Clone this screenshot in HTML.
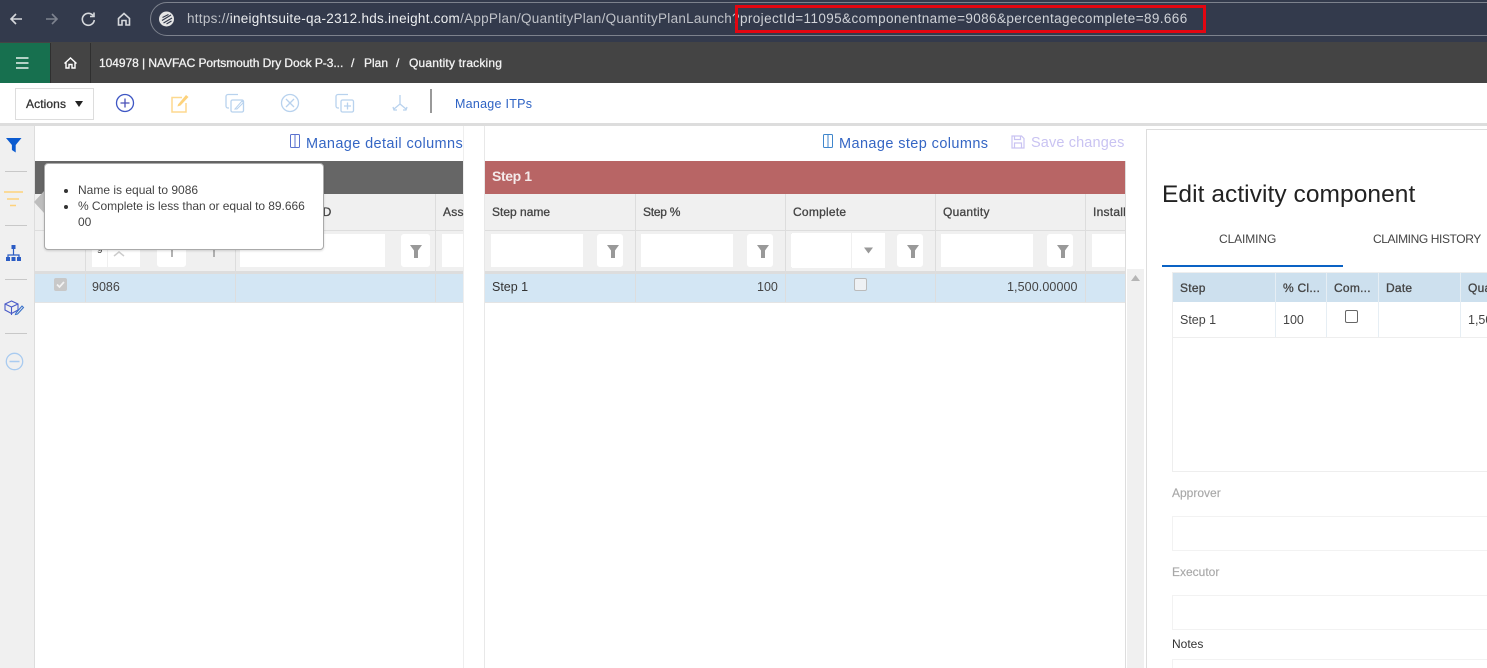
<!DOCTYPE html>
<html><head><meta charset="utf-8"><title>Quantity tracking</title>
<style>
html,body{margin:0;padding:0;width:1487px;height:668px;overflow:hidden;background:#fff;font-family:"Liberation Sans",sans-serif}
#p{position:relative;width:1487px;height:668px;overflow:hidden;background:#fff}
.b{position:absolute}
.t{position:absolute;white-space:nowrap;line-height:16px;font-size:12px;color:#333}
.h{color:#444;font-size:12px;-webkit-text-stroke:.3px #444;letter-spacing:.25px}
.n{color:#f2f2f2;font-size:12px;-webkit-text-stroke:.3px #f2f2f2}
.f{position:absolute;background:#fff;top:234px;height:33px}
.fb{position:absolute;background:#fff;top:234px;width:26px;height:33px;border-radius:3px}
svg{position:absolute;overflow:visible}
</style></head><body><div id="p">

<!-- browser bar -->
<div class="b" style="left:0;top:0;width:1487px;height:42px;background:#333a4c"></div>
<div class="b" style="left:150px;top:2px;width:1400px;height:34px;border:1px solid #7d828d;border-radius:17px;box-sizing:border-box"></div>
<svg style="left:0;top:0" width="150" height="42" fill="none" stroke-width="1.6">
<path d="M22 19H11M16 14l-5 5 5 5" stroke="#d6d8dc"/>
<path d="M46 19h11M52 14l5 5-5 5" stroke="#7e838f"/>
<path d="M93 15.500a6 6 0 1 0 1.300 4.500M94 12.500v4h-4" stroke="#d6d8dc"/>
<path d="M118.500 18.500l5.500-5 5.500 5v6.500h-3.500v-4.500h-4v4.500h-3.500z" stroke="#d6d8dc"/>
<circle cx="166.500" cy="19" r="7.500" fill="#e6e6e6" stroke="none"/>
</svg>
<svg style="left:159px;top:11px" width="16" height="16" fill="none" stroke="#333a4c" stroke-width="1.200"><path d="M3.500 6.500l6-3M3 9.500l9-5.500M4.500 12l8.500-5M7.500 13l5-3"/></svg>
<div class="t" style="left:187px;top:11px;font-size:13.500px;color:#bfc2c8;letter-spacing:.27px">https://<span style="color:#eceef0">ineightsuite-qa-2312.hds.ineight.com</span>/AppPlan/QuantityPlan/QuantityPlanLaunch?</div>
<div class="t" style="left:740px;top:11px;font-size:13.500px;color:#d0d3d8;letter-spacing:.39px">projectId=11095&amp;componentname=9086&amp;percentagecomplete=89.666</div>
<div class="b" style="left:735px;top:5px;width:471px;height:28px;border:3px solid #e30611;box-sizing:border-box"></div>

<!-- app header -->
<div class="b" style="left:0;top:42px;width:1487px;height:41px;background:#444"></div>
<div class="b" style="left:0;top:43px;width:50px;height:40px;background:#17704f"></div>
<div class="b" style="left:50px;top:43px;width:1px;height:40px;background:#2f2f2f"></div>
<div class="b" style="left:90px;top:43px;width:1px;height:40px;background:#2f2f2f"></div>
<svg style="left:0;top:43px" width="90" height="40" fill="none" stroke="#fff">
<path d="M16 15h12.500M16 20h12.500M16 25h12.500" stroke-width="1.500" stroke="#e9f2ee"/>
<path d="M64.500 20.500l6-5.500 6 5.500M66 19.500v5.500h3v-3.500h3v3.500h3v-5.500" stroke-width="1.400"/>
</svg>
<div class="t n" style="left:99px;top:55px;letter-spacing:-.05px">104978 | NAVFAC Portsmouth Dry Dock P-3...</div>
<div class="t n" style="left:351px;top:55px">/</div>
<div class="t n" style="left:364px;top:55px">Plan</div>
<div class="t n" style="left:396px;top:55px">/</div>
<div class="t n" style="left:409px;top:55px;letter-spacing:.18px">Quantity tracking</div>

<!-- toolbar -->
<div class="b" style="left:0;top:123px;width:1487px;height:3px;background:#ddd"></div>
<div class="b" style="left:15px;top:88px;width:79px;height:32px;border:1px solid #ddd;box-sizing:border-box"></div>
<div class="t" style="left:26px;top:96px;color:#333;-webkit-text-stroke:.3px #333;letter-spacing:.1px">Actions</div>
<svg style="left:75px;top:101px" width="9" height="6"><path d="M0 0h8L4 6z" fill="#222"/></svg>
<svg style="left:100px;top:85px" width="320" height="38" fill="none" stroke-width="1.300">
<circle cx="25" cy="18" r="8.500" stroke="#3f57c4"/><path d="M25 13.500v9M20.500 18h9" stroke="#4a50b8"/>
<path d="M82 12.500H72V27H86V18" stroke="#fdd98f" stroke-width="1.500"/><path d="M78 19.500l8-9.500 2.500 2-8 8.500-3 1z" fill="#fdd27b"/>
<path d="M138 9.500h-10a2 2 0 0 0-2 2V21a2 2 0 0 0 2 2h1" stroke="#b8d2ee"/>
<rect x="131" y="15" width="12.500" height="12" rx="1.500" stroke="#b8d2ee"/><path d="M135 24l7-8 1.500 1.500-6.500 6.500z" stroke="#b8d2ee" stroke-width="1"/>
<circle cx="190" cy="18" r="8.500" stroke="#b8d2ee"/><path d="M186 14l8 8M194 14l-8 8" stroke="#b8d2ee"/>
<path d="M248 9.500h-10a2 2 0 0 0-2 2V21a2 2 0 0 0 2 2h1" stroke="#b8d2ee"/>
<rect x="241" y="15" width="12.500" height="12" rx="1.500" stroke="#b8d2ee"/><path d="M247.500 17.500v7M244 21h7" stroke="#b8d2ee"/>
<path d="M300 10v9l-6 5M300 19l6 5M293 22l1 3 3 0M307 22l-1 3-3 0" stroke="#b8d2ee"/>
</svg>
<div class="b" style="left:430px;top:89px;width:2px;height:24px;background:#999"></div>
<div class="t" style="left:455px;top:96px;color:#2d62c4;font-size:12.500px;letter-spacing:.26px">Manage ITPs</div>

<!-- left rail -->
<div class="b" style="left:0;top:126px;width:34px;height:542px;background:#f0f0f0;border-right:1px solid #ddd"></div>
<div class="b" style="left:5px;top:171px;width:22px;height:1px;background:#c8c8c8"></div>
<div class="b" style="left:5px;top:225px;width:22px;height:1px;background:#c8c8c8"></div>
<div class="b" style="left:5px;top:279px;width:22px;height:1px;background:#c8c8c8"></div>
<div class="b" style="left:5px;top:333px;width:22px;height:1px;background:#c8c8c8"></div>
<svg style="left:0;top:126px" width="34" height="250" fill="none">
<path d="M6 12h15.500l-5.800 7v7.500l-3.800-2.500v-5z" fill="#0b5bd0"/>
<path d="M4 66h19M7 73h12M10 79.500h6" stroke="#fdd27b" stroke-width="1.500"/>
<path d="M13.500 121v8M8 133v-4h11v4" stroke="#2b5cc4" stroke-width="1.200"/>
<rect x="11.500" y="119" width="4" height="4" fill="#2b5cc4"/><rect x="6" y="131" width="4" height="4" fill="#2b5cc4"/><rect x="11.500" y="131" width="4" height="4" fill="#2b5cc4"/><rect x="17" y="131" width="4" height="4" fill="#2b5cc4"/>
<path d="M5 178l6.500-3 6.500 3v6l-6.500 3.500L5 184zM5 178l6.500 3 6.500-3M11.500 181v8" stroke="#4a5bc8" stroke-width="1.100"/>
<path d="M16 187l6-7 1.500 1.500-6 6.500-2 .5z" stroke="#3a72c9" stroke-width="1.100"/>
<circle cx="14.500" cy="235.500" r="8.200" stroke="#a9cbf0" stroke-width="1.300"/><path d="M9.500 235.500h10" stroke="#a9cbf0" stroke-width="1.500"/>
</svg>

<!-- manage links -->
<svg style="left:290px;top:134px" width="10" height="14" fill="none" stroke="#5a72cf"><rect x=".5" y=".5" width="9" height="13" rx="1"/><path d="M5 .5v13"/></svg>
<div class="t" style="left:306px;top:136px;font-size:14.500px;color:#3566c4;letter-spacing:.38px">Manage detail columns</div>
<svg style="left:823px;top:134px" width="10" height="14" fill="none" stroke="#3f86cc"><rect x=".5" y=".5" width="9" height="13" rx="1"/><path d="M5 .5v13"/></svg>
<div class="t" style="left:839px;top:136px;font-size:14.500px;color:#3566c4;letter-spacing:.4px">Manage step columns</div>
<svg style="left:1011px;top:135px" width="14" height="14" fill="none" stroke="#c9c3f2" stroke-width="1.200"><path d="M1 1h9.500L13 3.500V13H1zM3.500 1v3.500h6V1M3.500 13V8h7v5"/></svg>
<div class="t" style="left:1031px;top:135px;font-size:14.500px;color:#c9c3f2;letter-spacing:.13px">Save changes</div>

<!-- left grid -->
<div class="b" style="left:35px;top:161px;width:428px;height:33px;background:#666"></div>
<div class="b" style="left:35px;top:194px;width:428px;height:36px;background:#f0f0f0"></div>
<div class="b" style="left:35px;top:230px;width:428px;height:1px;background:#ddd"></div>
<div class="b" style="left:35px;top:231px;width:428px;height:40px;background:#f0f0f0"></div>
<div class="b" style="left:35px;top:271px;width:428px;height:3px;background:#ddd"></div>
<div class="b" style="left:35px;top:274px;width:428px;height:28px;background:#d3e6f4"></div>
<div class="b" style="left:35px;top:302px;width:428px;height:1px;background:#e4e4e4"></div>
<div class="b" style="left:85px;top:231px;width:1px;height:71px;background:#ddd"></div>
<div class="b" style="left:235px;top:194px;width:1px;height:108px;background:#ddd"></div>
<div class="b" style="left:435px;top:194px;width:1px;height:108px;background:#ddd"></div>
<div class="b" style="left:463px;top:126px;width:1px;height:542px;background:#eee"></div>
<div class="t h" style="left:319px;top:204px">ID</div>
<div class="t h" style="left:443px;top:204px">Ass</div>
<div class="f" style="left:92px;width:15px"></div>
<div class="f" style="left:108px;width:32px"></div>
<div class="f" style="left:157px;width:29px;border-radius:3px"></div>
<div class="f" style="left:240px;width:145px"></div>
<div class="fb" style="left:401px;width:29px"></div>
<div class="f" style="left:442px;width:21px"></div>
<svg style="left:91px;top:250px" width="140" height="16" fill="none">
<path d="M26 6l-5-4-5 4" transform="translate(7 0)" stroke="#ccc" stroke-width="1.500" />
<path d="M81 0v7M123 0v7" stroke="#999" stroke-width="1.500"/>
</svg>
<div class="t" style="left:97px;top:243px;font-size:10px;color:#444">9</div>
<svg style="left:410px;top:245px" width="13" height="14"><path d="M0 0h12L8 5.500V13H4V5.500z" fill="#999"/></svg>
<div class="b" style="left:54px;top:278px;width:13px;height:13px;background:#c8c8c8;border-radius:2px"></div>
<svg style="left:54px;top:278px" width="13" height="13" fill="none"><path d="M3 6.500l2.500 2.500 4.500-5" stroke="#f2f2f2" stroke-width="1.700"/></svg>
<div class="t" style="left:92px;top:279px;font-size:12.500px;color:#444">9086</div>

<!-- tooltip -->
<svg style="left:34px;top:190px" width="12" height="24"><path d="M11 0v24L0 12z" fill="#bdbdbd"/></svg>
<div class="b" style="left:44px;top:163px;width:280px;height:87px;background:#fff;border:1px solid #aaa;border-radius:4px;box-sizing:border-box;box-shadow:0 1px 2px rgba(0,0,0,.15)"></div>
<div class="b" style="left:64px;top:189px;width:4px;height:4px;border-radius:50%;background:#333"></div>
<div class="b" style="left:64px;top:205px;width:4px;height:4px;border-radius:50%;background:#333"></div>
<div class="t" style="left:78px;top:182px;color:#444">Name is equal to 9086</div>
<div class="t" style="left:78px;top:198px;color:#444;letter-spacing:-.05px">% Complete is less than or equal to 89.666</div>
<div class="t" style="left:78px;top:214px;color:#444">00</div>

<!-- right grid -->
<div class="b" style="left:485px;top:161px;width:640px;height:33px;background:#b86565"></div>
<div class="t" style="left:492px;top:168px;font-weight:bold;font-size:14px;color:#f4eaea;letter-spacing:-.4px">Step 1</div>
<div class="b" style="left:485px;top:194px;width:640px;height:36px;background:#f0f0f0"></div>
<div class="b" style="left:485px;top:230px;width:640px;height:1px;background:#ddd"></div>
<div class="b" style="left:485px;top:231px;width:640px;height:40px;background:#f0f0f0"></div>
<div class="b" style="left:485px;top:271px;width:640px;height:3px;background:#ddd"></div>
<div class="b" style="left:485px;top:274px;width:640px;height:28px;background:#d3e6f4"></div>
<div class="b" style="left:485px;top:302px;width:640px;height:1px;background:#e4e4e4"></div>
<div class="b" style="left:484px;top:126px;width:1px;height:542px;background:#e8e8e8"></div>
<div class="b" style="left:1125px;top:161px;width:1px;height:507px;background:#ddd"></div>
<div class="b" style="left:635px;top:194px;width:1px;height:108px;background:#ddd"></div>
<div class="b" style="left:785px;top:194px;width:1px;height:108px;background:#ddd"></div>
<div class="b" style="left:935px;top:194px;width:1px;height:108px;background:#ddd"></div>
<div class="b" style="left:1085px;top:194px;width:1px;height:108px;background:#ddd"></div>
<div class="t h" style="left:492px;top:204px;letter-spacing:0">Step name</div>
<div class="t h" style="left:643px;top:204px;letter-spacing:-.25px">Step %</div>
<div class="t h" style="left:793px;top:204px">Complete</div>
<div class="t h" style="left:943px;top:204px">Quantity</div>
<div class="t h" style="left:1093px;top:204px;width:32px;overflow:hidden">Install</div>

<div class="f" style="left:491px;width:92px"></div><div class="fb" style="left:597px"></div>
<div class="f" style="left:641px;width:92px"></div><div class="fb" style="left:747px"></div>
<div class="f" style="left:791px;width:46px"></div><div class="f" style="left:792px;width:93px;top:233px;height:35px"></div><div class="fb" style="left:897px"></div>
<div class="f" style="left:941px;width:92px"></div><div class="fb" style="left:1047px"></div>
<div class="f" style="left:1092px;width:33px"></div>
<div class="b" style="left:851px;top:233px;width:1px;height:35px;background:#f0f0f0"></div>
<svg style="left:0;top:245px" width="1100" height="14" fill="#999">
<path d="M607 0h12l-4 5.500V13h-4V5.500z"/><path d="M757 0h12l-4 5.500V13h-4V5.500z"/><path d="M907 0h12l-4 5.500V13h-4V5.500z"/><path d="M1057 0h12l-4 5.500V13h-4V5.500z"/>
<path d="M864 2.500h9l-4.500 6z"/>
</svg>
<div class="t" style="left:492px;top:279px;color:#333;font-size:12.500px">Step 1</div>
<div class="t" style="left:757px;top:279px;color:#444;font-size:12.500px">100</div>
<div class="b" style="left:854px;top:278px;width:13px;height:13px;background:#eef1f4;border:1px solid #bbb;border-radius:2px;box-sizing:border-box"></div>
<div class="t" style="left:1007px;top:279px;color:#444;font-size:12.500px;letter-spacing:.1px">1,500.00000</div>

<!-- scrollbar -->
<div class="b" style="left:1127px;top:269px;width:17px;height:399px;background:#f0f0f0"></div>
<svg style="left:1131px;top:275px" width="9" height="6"><path d="M4.500 0L9 6H0z" fill="#b5b5b5"/></svg>

<!-- side panel -->
<div class="b" style="left:1146px;top:129px;width:341px;height:539px;background:#fff;border-left:1px solid #ddd;border-top:1px solid #ddd;box-sizing:border-box"></div>
<div class="t" style="left:1162px;top:180px;font-size:24.500px;line-height:30px;color:#222;letter-spacing:.06px">Edit activity component</div>
<div class="t" style="left:1219px;top:231px;color:#444;font-size:12px;letter-spacing:-.1px">CLAIMING</div>
<div class="t" style="left:1373px;top:231px;color:#444;font-size:12px;letter-spacing:-.4px">CLAIMING HISTORY</div>
<div class="b" style="left:1162px;top:265px;width:181px;height:2px;background:#0a62c4"></div>

<div class="b" style="left:1172px;top:272px;width:315px;height:200px;border:1px solid #eee;border-right:0;box-sizing:border-box"></div>
<div class="b" style="left:1173px;top:273px;width:314px;height:29px;background:#cde0ee"></div>
<div class="b" style="left:1173px;top:337px;width:314px;height:1px;background:#eee"></div>
<div class="b" style="left:1275px;top:273px;width:1px;height:64px;background:#e6eef4"></div>
<div class="b" style="left:1326px;top:273px;width:1px;height:64px;background:#e6eef4"></div>
<div class="b" style="left:1378px;top:273px;width:1px;height:64px;background:#e6eef4"></div>
<div class="b" style="left:1460px;top:273px;width:1px;height:64px;background:#e6eef4"></div>
<div class="t h" style="left:1180px;top:280px">Step</div>
<div class="t h" style="left:1283px;top:280px">% Cl...</div>
<div class="t h" style="left:1334px;top:280px">Com...</div>
<div class="t h" style="left:1386px;top:280px">Date</div>
<div class="t h" style="left:1468px;top:280px">Qua</div>
<div class="t" style="left:1180px;top:312px;color:#444;font-size:12.500px">Step 1</div>
<div class="t" style="left:1283px;top:312px;color:#444;font-size:12.500px">100</div>
<div class="b" style="left:1345px;top:310px;width:13px;height:13px;border:1px solid #666;border-radius:2px;box-sizing:border-box"></div>
<div class="t" style="left:1468px;top:312px;color:#444;font-size:12.500px">1,50</div>

<div class="t" style="left:1172px;top:485px;color:#a8a8a8;-webkit-text-stroke:.15px #a8a8a8">Approver</div>
<div class="b" style="left:1172px;top:516px;width:315px;height:35px;border:1px solid #f2f2f2;border-right:0;box-sizing:border-box"></div>
<div class="t" style="left:1172px;top:564px;color:#a8a8a8;-webkit-text-stroke:.15px #a8a8a8">Executor</div>
<div class="b" style="left:1172px;top:595px;width:315px;height:35px;border:1px solid #f2f2f2;border-right:0;box-sizing:border-box"></div>
<div class="t" style="left:1172px;top:636px;color:#333">Notes</div>
<div class="b" style="left:1172px;top:659px;width:315px;height:20px;border:1px solid #f2f2f2;border-right:0;box-sizing:border-box"></div>

</div></body></html>
